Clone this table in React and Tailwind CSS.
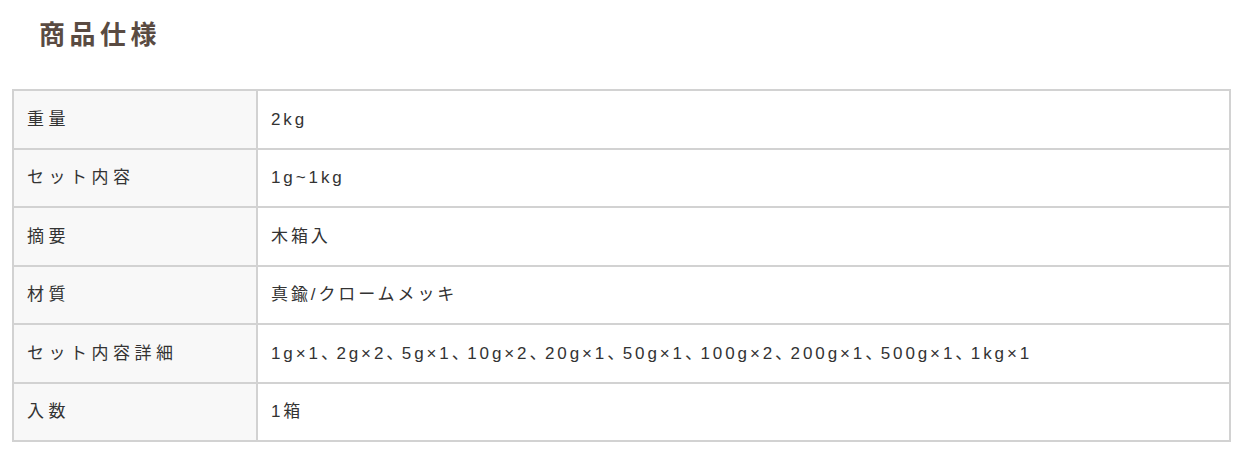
import React from 'react';

const specs = [
  { label: '重量', value: '2kg' },
  { label: 'セット内容', value: '1g~1kg' },
  { label: '摘要', value: '木箱入' },
  { label: '材質', value: '真鍮/クロームメッキ' },
  { label: 'セット内容詳細', value: '1g×1、2g×2、5g×1、10g×2、20g×1、50g×1、100g×2、200g×1、500g×1、1kg×1' },
  { label: '入数', value: '1箱' },
];

// the reference font sets "、" a little narrower, so tighten it
function Value({ text }) {
  const parts = text.split('、');
  return parts.map((p, i) => (
    <React.Fragment key={i}>
      {p}
      {i < parts.length - 1 && <span className="tracking-[-1.5px]">、</span>}
    </React.Fragment>
  ));
}

export default function App() {
  return (
    <div
      className="bg-white w-[1243px] h-[476px] px-3 pt-[17px]"
      style={{ fontFamily: '"Liberation Sans", "Noto Sans CJK JP", sans-serif' }}
    >
      <h2 className="pl-[27px] text-[26px] leading-[36px] font-bold tracking-[4.5px] text-[#5a4b42]">
        商品仕様
      </h2>

      <table className="mt-[36px] w-full border-collapse border-2 border-[#d2d2d2] text-[#333]">
        <tbody>
          {specs.map((row) => (
            <tr key={row.label} className="h-[58.5px]">
              <th className="w-[244px] border-2 border-[#d2d2d2] bg-[#f8f8f8] pl-[13px] text-left text-[17px] tracking-[4.5px] font-normal">
                {row.label}
              </th>
              <td className="border-2 border-[#d2d2d2] pl-[13px] text-[17px] tracking-[2.9px]">
                <Value text={row.value} />
              </td>
            </tr>
          ))}
        </tbody>
      </table>
    </div>
  );
}
